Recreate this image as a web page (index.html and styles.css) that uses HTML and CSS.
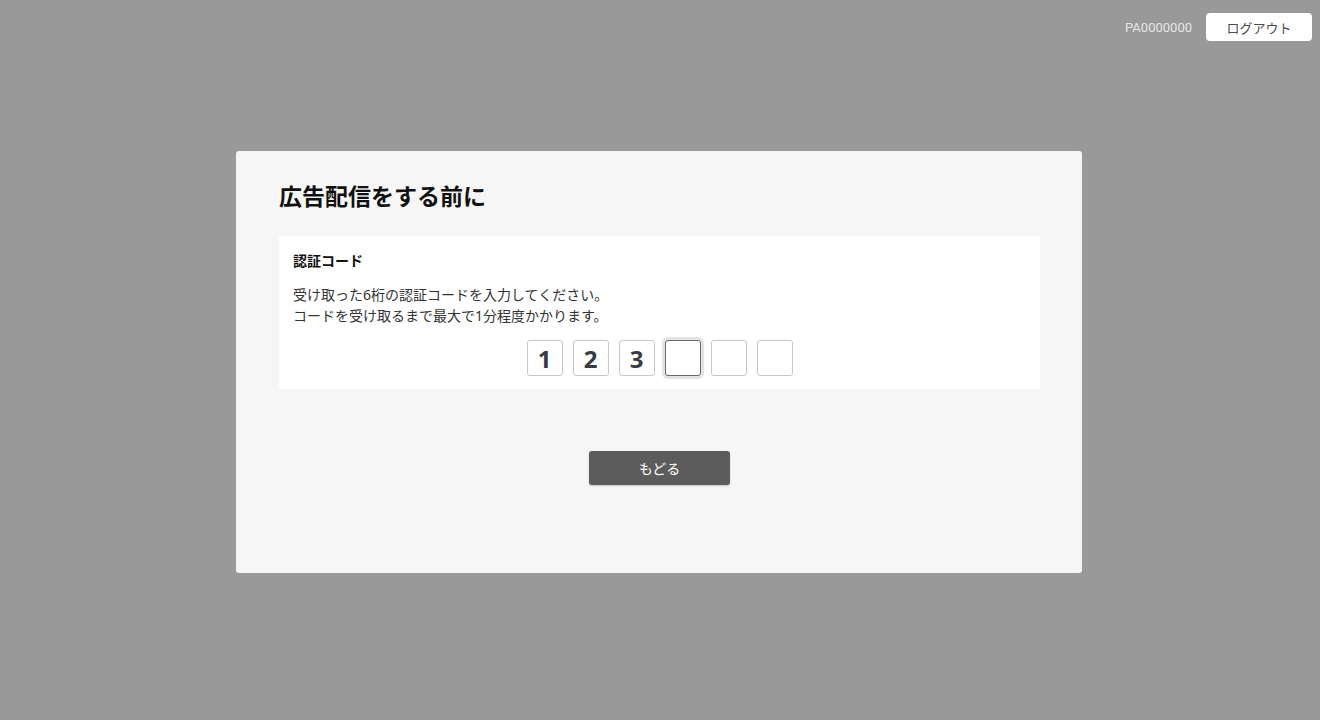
FILE: index.html
```html
<!DOCTYPE html>
<html lang="ja">
<head>
<meta charset="utf-8">
<title>広告配信をする前に</title>
<link rel="stylesheet" href="styles.css">
</head>
<body>
<header class="topbar">
  <span class="account-id">PA0000000</span>
  <button class="logout">ログアウト</button>
</header>
<main class="stage">
  <section class="card">
    <h1 class="card-title">広告配信をする前に</h1>
    <div class="panel">
      <h2 class="panel-label">認証コード</h2>
      <p class="panel-text">受け取った6桁の認証コードを入力してください。<br>コードを受け取るまで最大で1分程度かかります。</p>
      <div class="code-row">
        <div class="code-box">1</div>
        <div class="code-box">2</div>
        <div class="code-box">3</div>
        <div class="code-box focused"></div>
        <div class="code-box"></div>
        <div class="code-box"></div>
      </div>
    </div>
    <div class="actions">
      <button class="back">もどる</button>
    </div>
  </section>
</main>
</body>
</html>
```

FILE: styles.css
```css
* { box-sizing: border-box; }
html, body { margin: 0; padding: 0; }
body {
  background: #999999;
  width: 1320px;
  height: 720px;
  overflow: hidden;
  font-family: "Noto Sans", "Noto Sans CJK JP", sans-serif;
  color: #222;
}
.topbar {
  display: flex;
  justify-content: flex-end;
  align-items: center;
  gap: 14px;
  padding: 13px 8px 0 0;
  height: 41px;
}
.account-id {
  font-family: Roboto, "Noto Sans", sans-serif;
  font-size: 13px;
  color: #e6e6e6;
}
.logout {
  width: 106px;
  height: 28px;
  background: #fff;
  border: none;
  border-radius: 4px;
  font-family: "Noto Sans CJK JP", sans-serif;
  font-size: 13px;
  color: #4a4a4a;
  padding: 0;
  cursor: pointer;
}
.stage {
  display: flex;
  justify-content: flex-start;
  padding: 110px 0 0 236px;
}
.card {
  width: 846px;
  background: #f6f6f6;
  border-radius: 3px;
  padding: 29px 42px 88px 43px;
}
.card-title {
  margin: 0 0 26px;
  font-family: "Noto Sans CJK JP", sans-serif;
  font-size: 23px;
  line-height: 30px;
  font-weight: 700;
  color: #111;
}
.panel {
  background: #fff;
  border-radius: 2px;
  padding: 14px 14px 13px;
}
.panel-label {
  margin: 0;
  font-family: "Noto Sans CJK JP", sans-serif;
  font-size: 14px;
  line-height: 20px;
  font-weight: 700;
  color: #111;
}
.panel-text {
  margin: 14px 0 0;
  font-size: 14px;
  line-height: 21px;
  color: #333;
}
.code-row {
  display: flex;
  justify-content: center;
  gap: 10px;
  margin-top: 14px;
}
.code-box {
  width: 36px;
  height: 36px;
  border: 1px solid #c8c8c8;
  border-radius: 3px;
  background: #fff;
  display: flex;
  align-items: center;
  justify-content: center;
  font-family: "Open Sans", "Noto Sans", sans-serif;
  font-size: 24px;
  font-weight: 700;
  color: #3a3a44;
}
.code-box.focused {
  border-color: #6a6a6a;
  box-shadow: 0 0 0 3px #e4e4e4;
}
.actions {
  display: flex;
  justify-content: center;
  margin-top: 62px;
}
.back {
  width: 141px;
  height: 34px;
  background: #5c5c5c;
  color: #fff;
  border: none;
  border-radius: 3px;
  font-family: "Noto Sans CJK JP", sans-serif;
  font-size: 14px;
  padding: 0;
  box-shadow: 0 1px 2px rgba(0,0,0,0.2);
}
```
